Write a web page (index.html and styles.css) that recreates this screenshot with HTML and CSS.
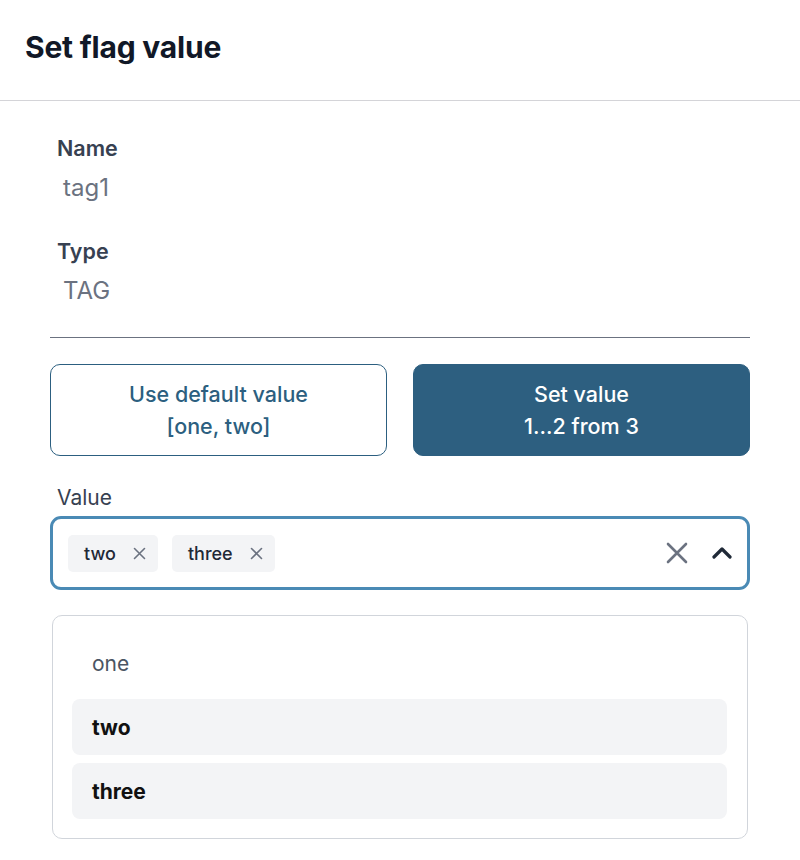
FILE: index.html
```html
<!DOCTYPE html>
<html>
<head>
<meta charset="utf-8">
<link rel="stylesheet" href="styles.css">
</head>
<body>
<header class="header">
  <h1 class="title">Set flag value</h1>
</header>
<main class="content">
  <div class="field">
    <div class="label">Name</div>
    <div class="value">tag1</div>
  </div>
  <div class="field">
    <div class="label">Type</div>
    <div class="value">TAG</div>
  </div>
  <hr class="divider">
  <div class="choices">
    <button class="choice outline">Use default value<br>[one, two]</button>
    <button class="choice filled">Set value<br>1...2 from 3</button>
  </div>
  <div class="value-label">Value</div>
  <div class="select">
    <div class="chips">
      <span class="chip">two <span class="chip-x"><svg width="13" height="13" viewBox="0 0 13 13"><path d="M1.5 1.5 L11.5 11.5 M11.5 1.5 L1.5 11.5" stroke="#6b7280" stroke-width="1.6" stroke-linecap="round"/></svg></span></span>
      <span class="chip">three <span class="chip-x"><svg width="13" height="13" viewBox="0 0 13 13"><path d="M1.5 1.5 L11.5 11.5 M11.5 1.5 L1.5 11.5" stroke="#6b7280" stroke-width="1.6" stroke-linecap="round"/></svg></span></span>
    </div>
    <div class="controls">
      <svg class="clear" width="22" height="22" viewBox="0 0 22 22"><path d="M2 2 L20 20 M20 2 L2 20" stroke="#6b7280" stroke-width="2.6" stroke-linecap="round"/></svg>
      <svg class="chevron" width="20" height="12" viewBox="0 0 20 12"><path d="M2 10 L10 2 L18 10" fill="none" stroke="#1f2937" stroke-width="3.2" stroke-linecap="round" stroke-linejoin="round"/></svg>
    </div>
  </div>
  <ul class="menu">
    <li class="option">one</li>
    <li class="option selected">two</li>
    <li class="option selected">three</li>
  </ul>
</main>
</body>
</html>
```
FILE: styles.css
```css
* { box-sizing: border-box; }
body {
  margin: 0;
  font-family: Inter, "Noto Sans", sans-serif;
  background: #fff;
  color: #111827;
}
.header {
  height: 101px;
  border-bottom: 1px solid #d4d4d8;
  padding: 28px 25px 0;
}
.title {
  margin: 0;
  font-size: 30px;
  font-weight: 700;
  line-height: 38px;
  color: #111827;
  letter-spacing: -0.2px;
}
.content {
  padding: 33px 50px 0;
}
.field { margin-bottom: 33px; }
.field + .field { margin-bottom: 30px; }
.label {
  padding-left: 7px;
  font-size: 21.5px;
  font-weight: 600;
  line-height: 28px;
  color: #374151;
}
.value {
  padding-left: 13px;
  margin-top: 10px;
  font-size: 24px;
  line-height: 32px;
  color: #6b7280;
}
.divider {
  margin: 0;
  border: 0;
  border-top: 1px solid #6b7280;
}
.choices {
  display: grid;
  grid-template-columns: 1fr 1fr;
  gap: 26px;
  margin-top: 26px;
}
.choice {
  height: 92px;
  border-radius: 10px;
  font-family: Inter, sans-serif;
  font-size: 21.5px;
  font-weight: 500;
  line-height: 32px;
  cursor: pointer;
}
.outline {
  background: #fff;
  border: 1.5px solid #2c5f80;
  color: #2c5f80;
}
.filled {
  background: #2d5f80;
  border: 1.5px solid #2d5f80;
  color: #fff;
}
.value-label {
  margin-top: 29px;
  padding-left: 7px;
  font-size: 21px;
  line-height: 26px;
  color: #374151;
}
.select {
  margin-top: 5px;
  height: 74px;
  border: 3px solid #4a8ab5;
  border-radius: 11px;
  display: flex;
  align-items: center;
  justify-content: space-between;
  padding: 0 15px;
}
.chips { display: flex; gap: 14px; }
.chip {
  display: inline-flex;
  align-items: center;
  gap: 17px;
  height: 37px;
  padding: 0 12px 0 16px;
  background: #f3f4f6;
  border-radius: 5px;
  font-size: 18px;
  font-weight: 500;
  color: #1f2937;
}
.chip-x { display: inline-flex; }
.controls {
  display: flex;
  align-items: center;
  gap: 24px;
}
.menu {
  list-style: none;
  margin: 25px 2px 0;
  padding: 19px 20px 19px 19px;
  border: 1px solid #d1d5db;
  border-radius: 10px;
  display: flex;
  flex-direction: column;
  gap: 8px;
}
.option {
  height: 56px;
  display: flex;
  align-items: center;
  padding-left: 20px;
  border-radius: 8px;
  font-size: 21px;
  color: #4b5563;
}
.option.selected {
  background: #f3f4f6;
  font-weight: 700;
  color: #111;
}
```
